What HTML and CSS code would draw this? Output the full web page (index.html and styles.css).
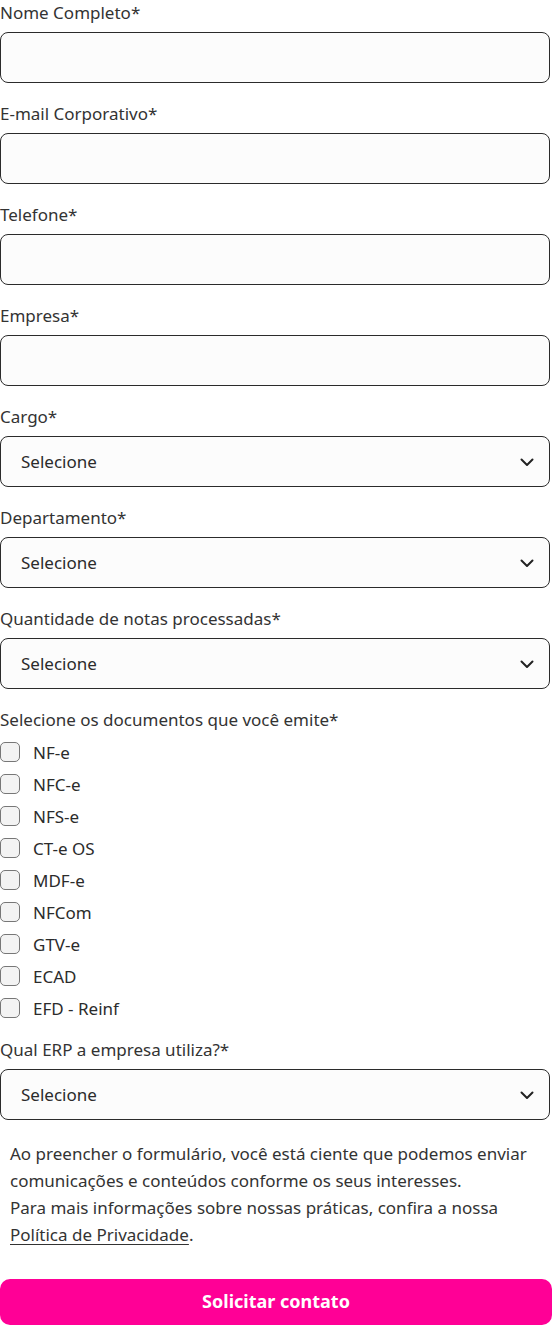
FILE: index.html
```html
<!DOCTYPE html>
<html lang="pt-BR">
<head>
<meta charset="utf-8">
<link rel="stylesheet" href="styles.css">
</head>
<body>
<form class="form">
  <div class="field">
    <label class="label">Nome Completo*</label>
    <div class="input"></div>
  </div>
  <div class="field">
    <label class="label">E-mail Corporativo*</label>
    <div class="input"></div>
  </div>
  <div class="field">
    <label class="label">Telefone*</label>
    <div class="input"></div>
  </div>
  <div class="field">
    <label class="label">Empresa*</label>
    <div class="input"></div>
  </div>
  <div class="field">
    <label class="label">Cargo*</label>
    <div class="input select"><span>Selecione</span><svg class="chev" viewBox="0 0 16 16" width="16" height="16"><path d="M2.5 5.5 L8 11 L13.5 5.5" fill="none" stroke="#222" stroke-width="2" stroke-linecap="round" stroke-linejoin="round"/></svg></div>
  </div>
  <div class="field">
    <label class="label">Departamento*</label>
    <div class="input select"><span>Selecione</span><svg class="chev" viewBox="0 0 16 16" width="16" height="16"><path d="M2.5 5.5 L8 11 L13.5 5.5" fill="none" stroke="#222" stroke-width="2" stroke-linecap="round" stroke-linejoin="round"/></svg></div>
  </div>
  <div class="field">
    <label class="label">Quantidade de notas processadas*</label>
    <div class="input select"><span>Selecione</span><svg class="chev" viewBox="0 0 16 16" width="16" height="16"><path d="M2.5 5.5 L8 11 L13.5 5.5" fill="none" stroke="#222" stroke-width="2" stroke-linecap="round" stroke-linejoin="round"/></svg></div>
  </div>
  <div class="field checks">
    <label class="label">Selecione os documentos que você emite*</label>
    <div class="check"><span class="box"></span>NF-e</div>
    <div class="check"><span class="box"></span>NFC-e</div>
    <div class="check"><span class="box"></span>NFS-e</div>
    <div class="check"><span class="box"></span>CT-e OS</div>
    <div class="check"><span class="box"></span>MDF-e</div>
    <div class="check"><span class="box"></span>NFCom</div>
    <div class="check"><span class="box"></span>GTV-e</div>
    <div class="check"><span class="box"></span>ECAD</div>
    <div class="check"><span class="box"></span>EFD - Reinf</div>
  </div>
  <div class="field">
    <label class="label">Qual ERP a empresa utiliza?*</label>
    <div class="input select"><span>Selecione</span><svg class="chev" viewBox="0 0 16 16" width="16" height="16"><path d="M2.5 5.5 L8 11 L13.5 5.5" fill="none" stroke="#222" stroke-width="2" stroke-linecap="round" stroke-linejoin="round"/></svg></div>
  </div>
  <p class="notice">Ao preencher o formulário, você está ciente que podemos enviar comunicações e conteúdos conforme os seus interesses.<br>Para mais informações sobre nossas práticas, confira a nossa <a class="link">Política de Privacidade</a>.</p>
  <button class="submit" type="button">Solicitar contato</button>
</form>
</body>
</html>
```
FILE: styles.css
```css
html, body {
  margin: 0;
  padding: 0;
  background: #fff;
}
body {
  font-family: "Noto Sans", "Open Sans", sans-serif;
  color: #333;
  font-size: 17px;
}
.form {
  width: 550px;
  display: flex;
  flex-direction: column;
}
.field {
  display: flex;
  flex-direction: column;
  margin-bottom: 18px;
}
.label {
  font-size: 17px;
  line-height: 24px;
  height: 23px;
  padding-top: 1px;
  margin-bottom: 8px;
  color: #333;
}
.input {
  box-sizing: border-box;
  height: 51px;
  border: 1px solid #2b2b2b;
  border-radius: 8px;
  background: #fcfcfc;
}
.select {
  display: flex;
  align-items: center;
  justify-content: space-between;
  padding: 0 14px 0 20px;
  font-size: 17px;
  color: #2b2b2b;
}
.chev {
  display: block;
}
.checks .label {
  margin-bottom: 5px;
}
.checks {
  margin-bottom: 13px;
}
.check {
  display: flex;
  align-items: center;
  height: 32px;
  font-size: 17px;
  color: #2b2b2b;
}
.box {
  box-sizing: border-box;
  width: 20px;
  height: 20px;
  border: 1px solid #777;
  border-radius: 5px;
  background: #f3f3f3;
  margin-right: 13px;
}
.notice {
  margin: 2px 0 31px;
  padding: 0 0 0 10px;
  font-size: 17px;
  line-height: 27px;
  color: #333;
}
.link {
  color: #333;
  text-decoration: underline;
  text-underline-offset: 3px;
}
.submit {
  width: 552px;
  height: 46px;
  border: 0;
  border-radius: 10px;
  background: #ff0096;
  color: #fff;
  font-family: "Noto Sans", "Open Sans", sans-serif;
  font-weight: 700;
  font-size: 18px;
  padding: 0 0 2px;
}
```
